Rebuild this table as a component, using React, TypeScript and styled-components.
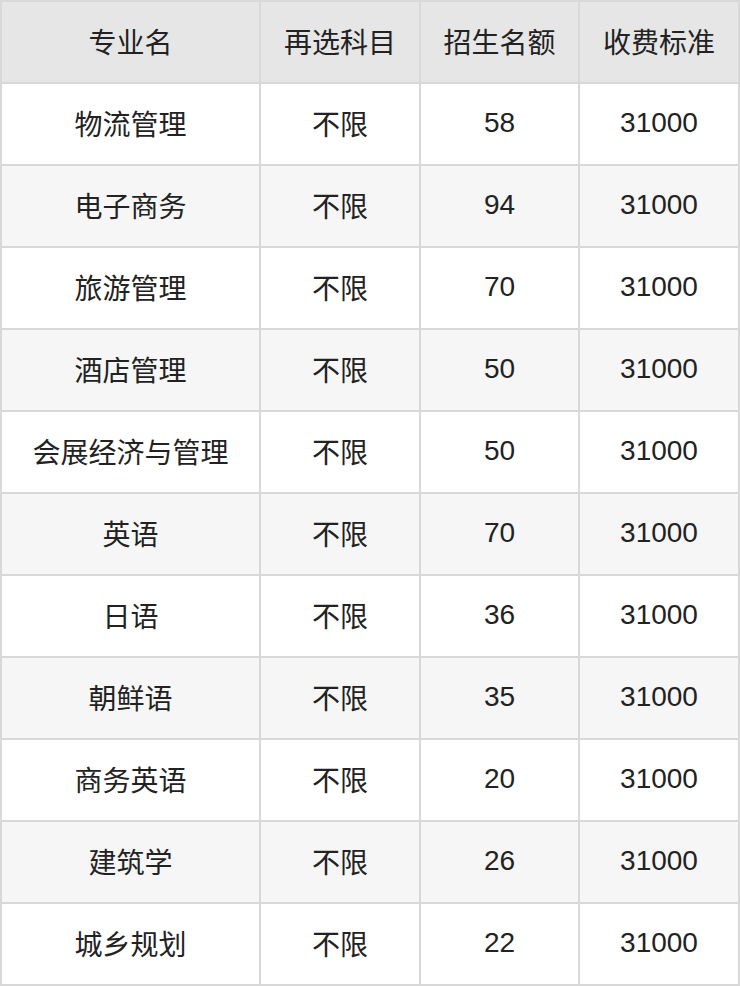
import styled, { createGlobalStyle } from 'styled-components';

const GlobalStyle = createGlobalStyle`
	html, body { margin: 0; padding: 0; background: #fff; }
	body { font-family: "Liberation Sans", "Noto Sans CJK SC", sans-serif; }
`;

const Table = styled.div`
	display: grid;
	grid-template-columns: 257px 158px 157px 158px;
	grid-auto-rows: 80px;
	gap: 2px;
	padding: 2px;
	width: 740px;
	box-sizing: border-box;
	background: #d8d8d8;
`;

const HeadCell = styled.div`
	display: flex;
	align-items: center;
	justify-content: center;
	padding-bottom: 3px;
	background: #e6e6e6;
	color: #222;
	font-size: 28px;
`;

const Cell = styled.div<{ $striped: boolean }>`
	display: flex;
	align-items: center;
	justify-content: center;
	padding-bottom: 3px;
	background: ${(p) => (p.$striped ? '#f6f6f6' : '#fff')};
	color: #222;
	font-size: 28px;
`;

const headers = ['专业名', '再选科目', '招生名额', '收费标准'];

const rows: [string, string, string, string][] = [
	['物流管理', '不限', '58', '31000'],
	['电子商务', '不限', '94', '31000'],
	['旅游管理', '不限', '70', '31000'],
	['酒店管理', '不限', '50', '31000'],
	['会展经济与管理', '不限', '50', '31000'],
	['英语', '不限', '70', '31000'],
	['日语', '不限', '36', '31000'],
	['朝鲜语', '不限', '35', '31000'],
	['商务英语', '不限', '20', '31000'],
	['建筑学', '不限', '26', '31000'],
	['城乡规划', '不限', '22', '31000'],
];

export default function App() {
	return (
		<>
			<GlobalStyle />
			<Table>
				{headers.map((h) => (
					<HeadCell key={h}>{h}</HeadCell>
				))}
				{rows.map((row, i) =>
					row.map((v, j) => (
						<Cell key={`${i}-${j}`} $striped={i % 2 === 1}>
							{v}
						</Cell>
					))
				)}
			</Table>
		</>
	);
}
